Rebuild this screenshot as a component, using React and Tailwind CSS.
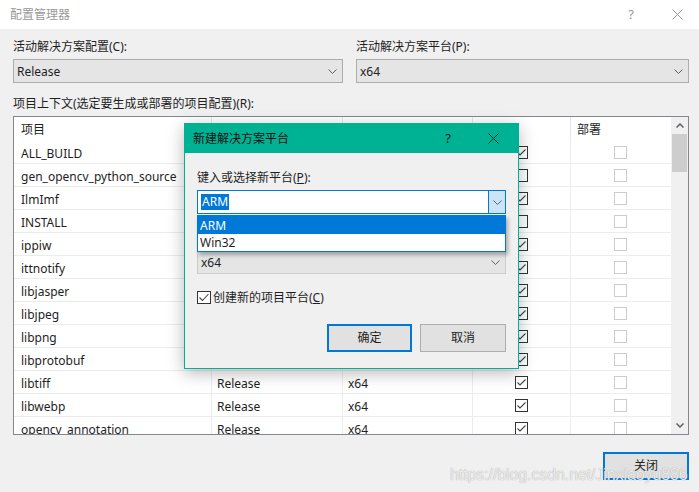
import React from 'react'

const rows = [
  ['ALL_BUILD', true],
  ['gen_opencv_python_source', false],
  ['IlmImf', true],
  ['INSTALL', false],
  ['ippiw', true],
  ['ittnotify', true],
  ['libjasper', true],
  ['libjpeg', true],
  ['libpng', true],
  ['libprotobuf', true],
  ['libtiff', true],
  ['libwebp', true],
  ['opencv_annotation', true],
]

function Chevron({ className = '' }) {
  return (
    <svg width="9" height="5" viewBox="0 0 9 5" className={className}>
      <polyline points="0.5,0.5 4.5,4.5 8.5,0.5" fill="none" stroke="#606060" strokeWidth="1" />
    </svg>
  )
}

function CheckBox({ checked, disabled }) {
  return (
    <span
      className={`flex h-[13px] w-[13px] items-center justify-center border bg-white ${
        disabled ? 'border-[#cccccc]' : 'border-[#333333]'
      }`}
    >
      {checked && (
        <svg width="11" height="11" viewBox="0 0 11 11">
          <polyline points="1.5,5.5 4,8 9.5,2.5" fill="none" stroke="#444" strokeWidth="1.1" />
        </svg>
      )}
    </span>
  )
}

function CloseX({ color, size = 11 }) {
  return (
    <svg width={size} height={size} viewBox="0 0 11 11">
      <path d="M0.5 0.5 L10.5 10.5 M10.5 0.5 L0.5 10.5" stroke={color} strokeWidth="1" />
    </svg>
  )
}

function Select({ value, className = '' }) {
  return (
    <div
      className={`flex h-[24px] items-center justify-between border border-[#adadad] bg-[#e5e5e5] pl-[3px] pr-[5px] text-[12px] text-[#1e1e1e] ${className}`}
    >
      <span className="pt-[1px]">{value}</span>
      <Chevron />
    </div>
  )
}

function NewPlatformDialog() {
  return (
    <div className="absolute left-[184px] top-[123px] flex h-[246px] w-[335px] flex-col border border-[#00b294] bg-[#f0f0f0] shadow-[0_4px_16px_rgba(0,0,0,0.28)]">
      <div className="flex h-[29px] items-center bg-[#00b294] pl-[8px] text-[12px] text-[#111]">
        <span className="flex-1 pt-[1px]">新建解决方案平台</span>
        <span className="mr-[37px] text-[13px]">?</span>
        <span className="mr-[19px]">
          <CloseX color="#222" />
        </span>
      </div>
      <div className="relative flex flex-col px-[12px] text-[12px] text-[#1e1e1e]">
        <div className="mt-[17px] h-[16px] leading-[16px]">
          键入或选择新平台(<span className="underline">P</span>):
        </div>
        <div className="mt-[4px] flex h-[24px] items-stretch border border-[#0078d7] bg-white">
          <div className="flex flex-1 items-center pl-[3px]">
            <span className="bg-[#0078d7] px-[1px] leading-[16px] text-white">ARM</span>
          </div>
          <div className="flex w-[17px] items-center justify-center border-l border-[#0078d7] bg-[#cce4f7]">
            <Chevron />
          </div>
        </div>
        <div className="mt-[14px] h-[16px] leading-[16px]">
          复制设置自(<span className="underline">S</span>):
        </div>
        <Select value="x64" className="mt-[6px] border-[#cccccc]" />
        <div className="mt-[15px] flex h-[16px] items-center gap-[2px]">
          <span className="flex h-[13px] w-[14px] items-center justify-center border border-[#333] bg-white">
            <svg width="12" height="11" viewBox="0 0 12 11">
              <polyline points="1.5,5.5 4.5,8.5 10.5,2" fill="none" stroke="#444" strokeWidth="1.1" />
            </svg>
          </span>
          <span className="pt-[1px]">
            创建新的项目平台(<span className="underline">C</span>)
          </span>
        </div>
        <div className="mt-[19px] flex justify-end gap-[8px]">
          <button className="flex h-[28px] w-[85px] items-center justify-center border-2 border-[#0078d7] bg-[#e1e1e1] text-[12px]">
            确定
          </button>
          <button className="flex h-[28px] w-[86px] items-center justify-center border border-[#adadad] bg-[#e1e1e1] text-[12px]">
            取消
          </button>
        </div>

        {/* 下拉列表，盖在"复制设置自"上面 */}
        <div className="absolute left-[12px] top-[62px] w-[309px] border border-[#0078d7] bg-white shadow-[2px_3px_4px_rgba(0,0,0,0.3)]">
          <div className="h-[18px] bg-[#0078d7] pl-[2px] leading-[19px] text-white">ARM</div>
          <div className="h-[17px] pl-[2px] leading-[18px]">Win32</div>
        </div>
      </div>
    </div>
  )
}

export default function App() {
  const cols = 'grid grid-cols-[198px_131px_130px_98px_99px]'
  return (
    <div className="relative h-[492px] w-[699px] overflow-hidden bg-[#f0f0f0] font-['Noto_Sans','Noto_Sans_CJK_SC',sans-serif] text-[12px] text-[#1e1e1e]">
      <div className="flex h-[29px] items-center bg-white pl-[10px] text-[12px] text-[#999]">
        <span className="flex-1 pt-[1px]">配置管理器</span>
        <span className="mr-[38px] text-[13px]">?</span>
        <span className="mr-[16px]">
          <CloseX color="#999" />
        </span>
      </div>

      <div className="flex flex-col pl-[13px] pr-[10px]">
        <div className="mt-[10px] flex gap-[13px]">
          <div className="flex w-[330px] flex-col gap-[4px]">
            <div className="h-[16px] leading-[16px]">活动解决方案配置(C):</div>
            <Select value="Release" />
          </div>
          <div className="flex flex-1 flex-col gap-[4px]">
            <div className="h-[16px] leading-[16px]">活动解决方案平台(P):</div>
            <Select value="x64" />
          </div>
        </div>

        <div className="mt-[13px] h-[16px] leading-[16px]">项目上下文(选定要生成或部署的项目配置)(R):</div>

        <div className="mt-[4px] flex h-[319px] border border-[#828790] bg-white">
          <div className="flex-1 overflow-hidden">
            <div className={`${cols} h-[24px]`}>
              <div className="flex items-center border-r border-[#e5e5e5] pl-[7px] pt-[2px]">项目</div>
              <div className="flex items-center border-r border-[#e5e5e5] pl-[5px] pt-[2px]">配置</div>
              <div className="flex items-center border-r border-[#e5e5e5] pl-[5px] pt-[2px]">平台</div>
              <div className="flex items-center border-r border-[#e5e5e5] pl-[6px] pt-[2px]">生成</div>
              <div className="flex items-center pl-[6px] pt-[2px]">部署</div>
            </div>
            {rows.map(([name, build]) => (
              <div key={name} className={`${cols} h-[23px] border-b border-[#ececec]`}>
                <div className="flex items-center border-r border-[#ececec] pl-[7px] pt-[3px]">{name}</div>
                <div className="flex items-center border-r border-[#ececec] pl-[5px] pt-[3px]">Release</div>
                <div className="flex items-center border-r border-[#ececec] pl-[5px] pt-[3px]">x64</div>
                <div className="flex items-center justify-center border-r border-[#ececec] pt-[1px]">
                  <CheckBox checked={build} />
                </div>
                <div className="flex items-center justify-center pt-[1px]">
                  <CheckBox disabled />
                </div>
              </div>
            ))}
          </div>
          <div className="flex w-[17px] flex-col bg-[#f0f0f0]">
            <div className="flex h-[17px] items-center justify-center">
              <svg width="8" height="5" viewBox="0 0 8 5">
                <polyline points="0.5,4.5 4,1 7.5,4.5" fill="none" stroke="#606060" strokeWidth="1.5" />
              </svg>
            </div>
            <div className="mx-[1px] h-[38px] bg-[#cdcdcd]" />
            <div className="flex-1" />
            <div className="flex h-[17px] items-center justify-center">
              <svg width="8" height="5" viewBox="0 0 8 5">
                <polyline points="0.5,0.5 4,4 7.5,0.5" fill="none" stroke="#606060" strokeWidth="1.5" />
              </svg>
            </div>
          </div>
        </div>

        <div className="mt-[17px] flex justify-end">
          <button className="flex h-[28px] w-[86px] items-center justify-center border-2 border-[#0078d7] bg-[#e1e1e1] text-[12px]">
            关闭
          </button>
        </div>
      </div>

      <NewPlatformDialog />

      <div className="pointer-events-none absolute left-[450px] top-[467px] font-['Liberation_Sans',sans-serif] text-[16px] leading-[16px] tracking-[-0.1px] text-white/80 [text-shadow:0_0_1px_#8a8a8a]">
        https://blog.csdn.net/Jinxiaoyu886
      </div>
    </div>
  )
}
